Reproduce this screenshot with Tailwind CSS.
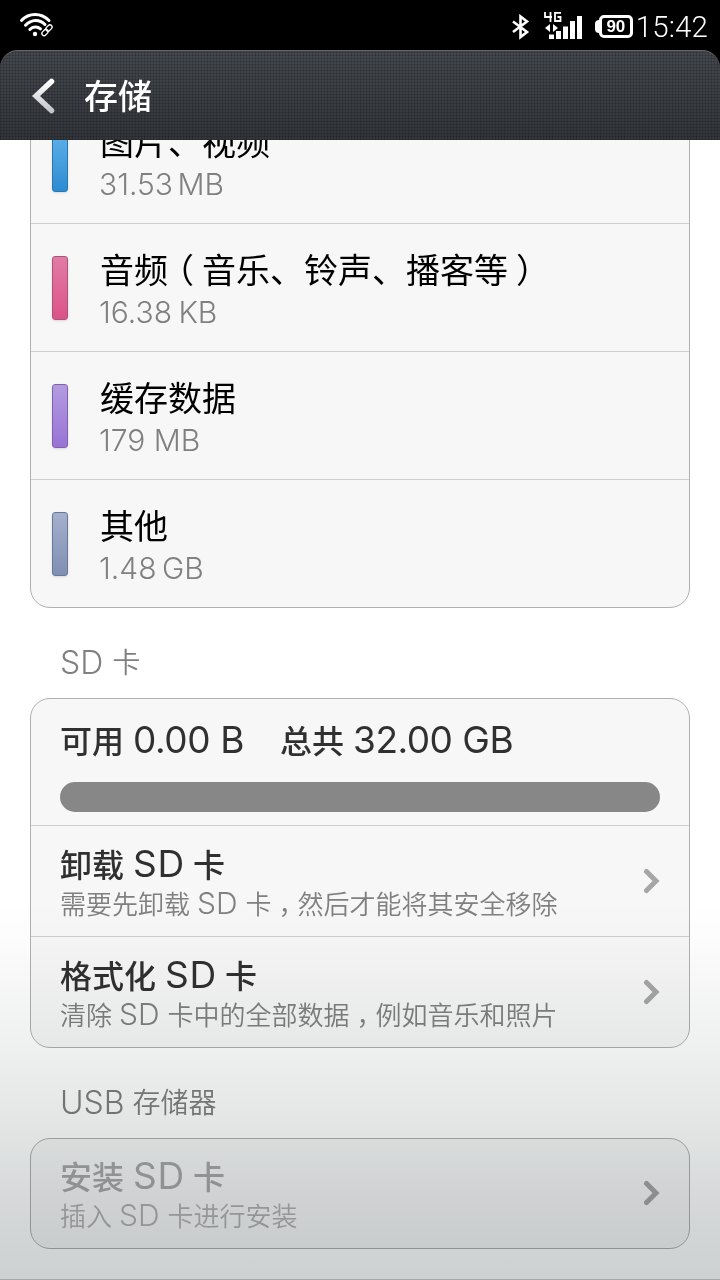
<!DOCTYPE html>
<html lang="zh-CN">
<head>
  <meta charset="UTF-8" />
  <meta name="viewport" content="width=device-width, initial-scale=1" />
  <title>存储</title>
  <script src="https://cdn.jsdelivr.net/npm/@tailwindcss/browser@4"></script>
</head>
<body class="bg-black font-['Inter','Noto_Sans_CJK_SC',sans-serif]">
  <div class="relative flex h-[1280px] w-[720px] flex-col overflow-hidden">

    <!-- Status bar -->
    <div class="flex h-[50px] shrink-0 items-center justify-between pr-3 pl-[19px] text-white">
      <svg class="h-[26px] w-[36px]" viewBox="0 0 36 26" fill="none" stroke="currentColor" stroke-linecap="round">
        <path d="M2.500 8.500C10 .5 22 .5 30 8.500" stroke-width="3" />
        <path d="M6.500 13.200C12.500 7 20.500 7 26 12.500" stroke-width="3" />
        <path d="M10.800 17.500C14 14.200 18.500 14.200 21.500 16.800" stroke-width="3" />
        <circle cx="16" cy="22" r="2.200" fill="currentColor" stroke="none" />
        <g stroke-width="1.300">
          <rect x="-3.500" y="-2.200" width="7" height="4.400" rx="2.200" transform="translate(30 16) rotate(-45)" />
          <rect x="-3.500" y="-2.200" width="7" height="4.400" rx="2.200" transform="translate(26 20.500) rotate(-45)" />
        </g>
      </svg>
      <div class="flex items-center pt-[3px]">
        <svg class="mr-[14px] h-[26px] w-[18px]" viewBox="0 0 18 26" fill="none" stroke="currentColor" stroke-width="2.600">
          <path d="M1 7.500L15 18L8.500 23V2.500L15 7.500L1 18" />
        </svg>
        <svg class="mr-[11px] h-[32px] w-[40px]" viewBox="0 0 40 32" fill="currentColor">
          <path d="M1 1V6H8M6.500 1V11M17 1.800H11V10H16.500V6H13.500" fill="none" stroke="currentColor" stroke-width="1.800" />
          <path d="M1 17l5-4v8zM14 17l-5-4v8zM5 23.500h5V28H5zM12 20h5v8h-5zM19 15.500h5V28h-5zM26 10h5v18h-5zM33 5h5v23h-5z" />
        </svg>
        <div class="mr-[3px] flex items-center">
          <div class="h-[13px] w-[4px] rounded-l-sm bg-white"></div>
          <div class="flex h-[23px] w-[34px] items-center justify-center rounded-[5px] border-[3px] border-white font-['Liberation_Sans'] text-[17px] leading-none font-bold">90</div>
        </div>
        <span class="font-[Roboto] text-[29.500px] leading-[32px] font-light tracking-[0.1px]">15:42</span>
      </div>
    </div>

    <!-- Title bar -->
    <header class="flex h-[90px] shrink-0 items-center rounded-t-[18px] border-t border-[#63666b] bg-[repeating-linear-gradient(90deg,rgba(0,0,0,0.15)_0px,rgba(0,0,0,0.15)_1px,transparent_1px,transparent_3px),repeating-linear-gradient(0deg,rgba(0,0,0,0.15)_0px,rgba(0,0,0,0.15)_1px,transparent_1px,transparent_3px),linear-gradient(#44484e,#32353a)] pl-[30px] text-white">
      <svg class="h-[38px] w-[26px]" viewBox="0 0 26 38" fill="none">
        <defs>
          <linearGradient id="back" x1="0" y1="0" x2="0" y2="1">
            <stop offset="0" stop-color="#fff" />
            <stop offset="1" stop-color="#c4c6ca" />
          </linearGradient>
        </defs>
        <path d="M21.500 4.500L6 19L21.500 33.500" stroke="url(#back)" stroke-width="5.500" stroke-linecap="round" />
      </svg>
      <h1 class="ml-[28px] pt-px text-[34px] font-medium">存储</h1>
    </header>

    <!-- Storage settings -->
    <main class="flex h-[1140px] shrink-0 flex-col overflow-hidden bg-white px-[30px]">
      <section class="-mt-[45px] shrink-0 divide-y divide-[#cfcfcf] rounded-[20px] border border-[#b0b0b0] bg-[#f7f7f7]">
        <div class="flex h-[128px] items-center pl-[21px]">
          <div class="h-16 w-4 rounded-[3px] border border-[#2877ae] bg-linear-to-b from-[#61b4ea] to-[#2c8bd2] shadow"></div>
          <div class="ml-8 pt-1">
            <div class="text-[34px] leading-[44px] text-black">图片、视频</div>
            <div class="-ml-px text-[30px] leading-[38px] font-[330] text-[#808080] [word-spacing:-4px]">31.53 MB</div>
          </div>
        </div>
        <div class="flex h-[128px] items-center pl-[21px]">
          <div class="h-16 w-4 rounded-[3px] border border-[#ad5377] bg-linear-to-b from-[#e07ba4] to-[#dc5287] shadow"></div>
          <div class="ml-8 pt-1">
            <div class="text-[34px] leading-[44px] text-black">音频<span class="mr-[8px] ml-[9px] [font-feature-settings:'halt']">（</span>音乐、铃声、播客等<span class="ml-[8px] [font-feature-settings:'halt']">）</span></div>
            <div class="-ml-px text-[30px] leading-[38px] font-[330] text-[#808080] [word-spacing:-2px]">16.38 KB</div>
          </div>
        </div>
        <div class="flex h-[128px] items-center pl-[21px]">
          <div class="h-16 w-4 rounded-[3px] border border-[#7f62ae] bg-linear-to-b from-[#b39be0] to-[#9873d6] shadow"></div>
          <div class="ml-8 pt-1">
            <div class="text-[34px] leading-[44px] text-black">缓存数据</div>
            <div class="-ml-px text-[30px] leading-[38px] font-[330] text-[#808080]">179 MB</div>
          </div>
        </div>
        <div class="flex h-[127px] items-center pl-[21px]">
          <div class="h-16 w-4 rounded-[3px] border border-[#69779a] bg-linear-to-b from-[#a5b0cc] to-[#7f8eb3] shadow"></div>
          <div class="ml-8 pt-1">
            <div class="text-[34px] leading-[44px] text-black">其他</div>
            <div class="-ml-px text-[30px] leading-[38px] font-[330] text-[#808080] [word-spacing:-3px]">1.48 GB</div>
          </div>
        </div>
      </section>

      <h2 class="flex h-[90px] shrink-0 items-center gap-[9px] pt-5 pl-[30px] text-[28px] font-[350] text-[#808080]"><span class="text-[32px] font-[330]">SD</span>卡</h2>

      <section class="h-[350px] shrink-0 divide-y divide-[#cfcfcf] rounded-[20px] border border-[#b0b0b0] bg-[#f7f7f7]">
        <div class="h-[127px] px-[29px] pt-[17px]">
          <div class="flex h-[48px] items-baseline text-[32px] leading-[48px] font-medium text-[#303030]">
            可用<span class="ml-[9px] text-[37px] font-normal tracking-[-0.4px]">0.00 B</span><span class="ml-9">总共</span><span class="ml-[9px] text-[37px] font-normal tracking-[-0.5px]">32.00 GB</span>
          </div>
          <div class="mt-[18px] h-[30px] rounded-full bg-[#878787]"></div>
        </div>
        <div class="flex h-[111px] items-center justify-between px-[29px]">
          <div class="pt-px">
            <div class="flex h-[42px] items-baseline text-[32px] leading-[42px] font-medium text-[#303030]">卸载<span class="mr-[8px] ml-[9px] text-[37px] font-normal tracking-[0.8px]">SD</span>卡</div>
            <div class="flex h-[36px] items-baseline text-[26px] leading-[36px] font-[350] text-[#808080]">需要先卸载<span class="mr-[8px] ml-[7px] text-[30px] font-[330]">SD</span>卡<span class="mr-[6px] ml-[7px] [font-feature-settings:'halt']">，</span>然后才能将其安全移除</div>
          </div>
          <svg class="h-[26px] w-[18px]" viewBox="0 0 18 26" fill="none" stroke="#a6a6a6" stroke-width="5" stroke-linecap="round"><path d="M4.500 3.500L14 13L4.500 22.500" /></svg>
        </div>
        <div class="flex h-[110px] items-center justify-between px-[29px]">
          <div class="pt-px">
            <div class="flex h-[42px] items-baseline text-[32px] leading-[42px] font-medium text-[#303030]">格式化<span class="mr-[8px] ml-[9px] text-[37px] font-normal tracking-[0.8px]">SD</span>卡</div>
            <div class="flex h-[36px] items-baseline text-[26px] leading-[36px] font-[350] text-[#808080]">清除<span class="mr-[8px] ml-[7px] text-[30px] font-[330]">SD</span>卡中的全部数据<span class="mr-[6px] ml-[7px] [font-feature-settings:'halt']">，</span>例如音乐和照片</div>
          </div>
          <svg class="h-[26px] w-[18px]" viewBox="0 0 18 26" fill="none" stroke="#a6a6a6" stroke-width="5" stroke-linecap="round"><path d="M4.500 3.500L14 13L4.500 22.500" /></svg>
        </div>
      </section>

      <h2 class="flex h-[90px] shrink-0 items-center gap-[8px] pt-5 pl-[30px] text-[28px] font-[350] text-[#808080]"><span class="text-[32px] font-[330]">USB</span>存储器</h2>

      <section class="flex h-[111px] shrink-0 items-center justify-between rounded-[20px] border border-[#b0b0b0] bg-[#f7f7f7] px-[29px] pb-px">
        <div class="pt-px">
          <div class="flex h-[42px] items-baseline text-[32px] leading-[42px] font-medium text-[#a9a9a9]">安装<span class="mr-[8px] ml-[9px] text-[37px] font-normal tracking-[0.8px]">SD</span>卡</div>
          <div class="flex h-[36px] items-baseline text-[26px] leading-[36px] font-[350] text-[#b2b2b2]">插入<span class="mr-[8px] ml-[7px] text-[30px] font-[330]">SD</span>卡进行安装</div>
        </div>
        <svg class="h-[26px] w-[18px]" viewBox="0 0 18 26" fill="none" stroke="#a6a6a6" stroke-width="5" stroke-linecap="round"><path d="M4.500 3.500L14 13L4.500 22.500" /></svg>
      </section>
    </main>

    <!-- Bottom fade -->
    <div class="pointer-events-none absolute inset-x-0 bottom-0 h-[380px] border-b border-[#a8a8a8] bg-[linear-gradient(#ffffff,#fbfbfb_13%,#eeefef_40%,#e6e9e8_53%,#e0e3e2_63%,#d6d8da_79%,#cdd1d2)] mix-blend-multiply"></div>
  </div>
</body>
</html>
